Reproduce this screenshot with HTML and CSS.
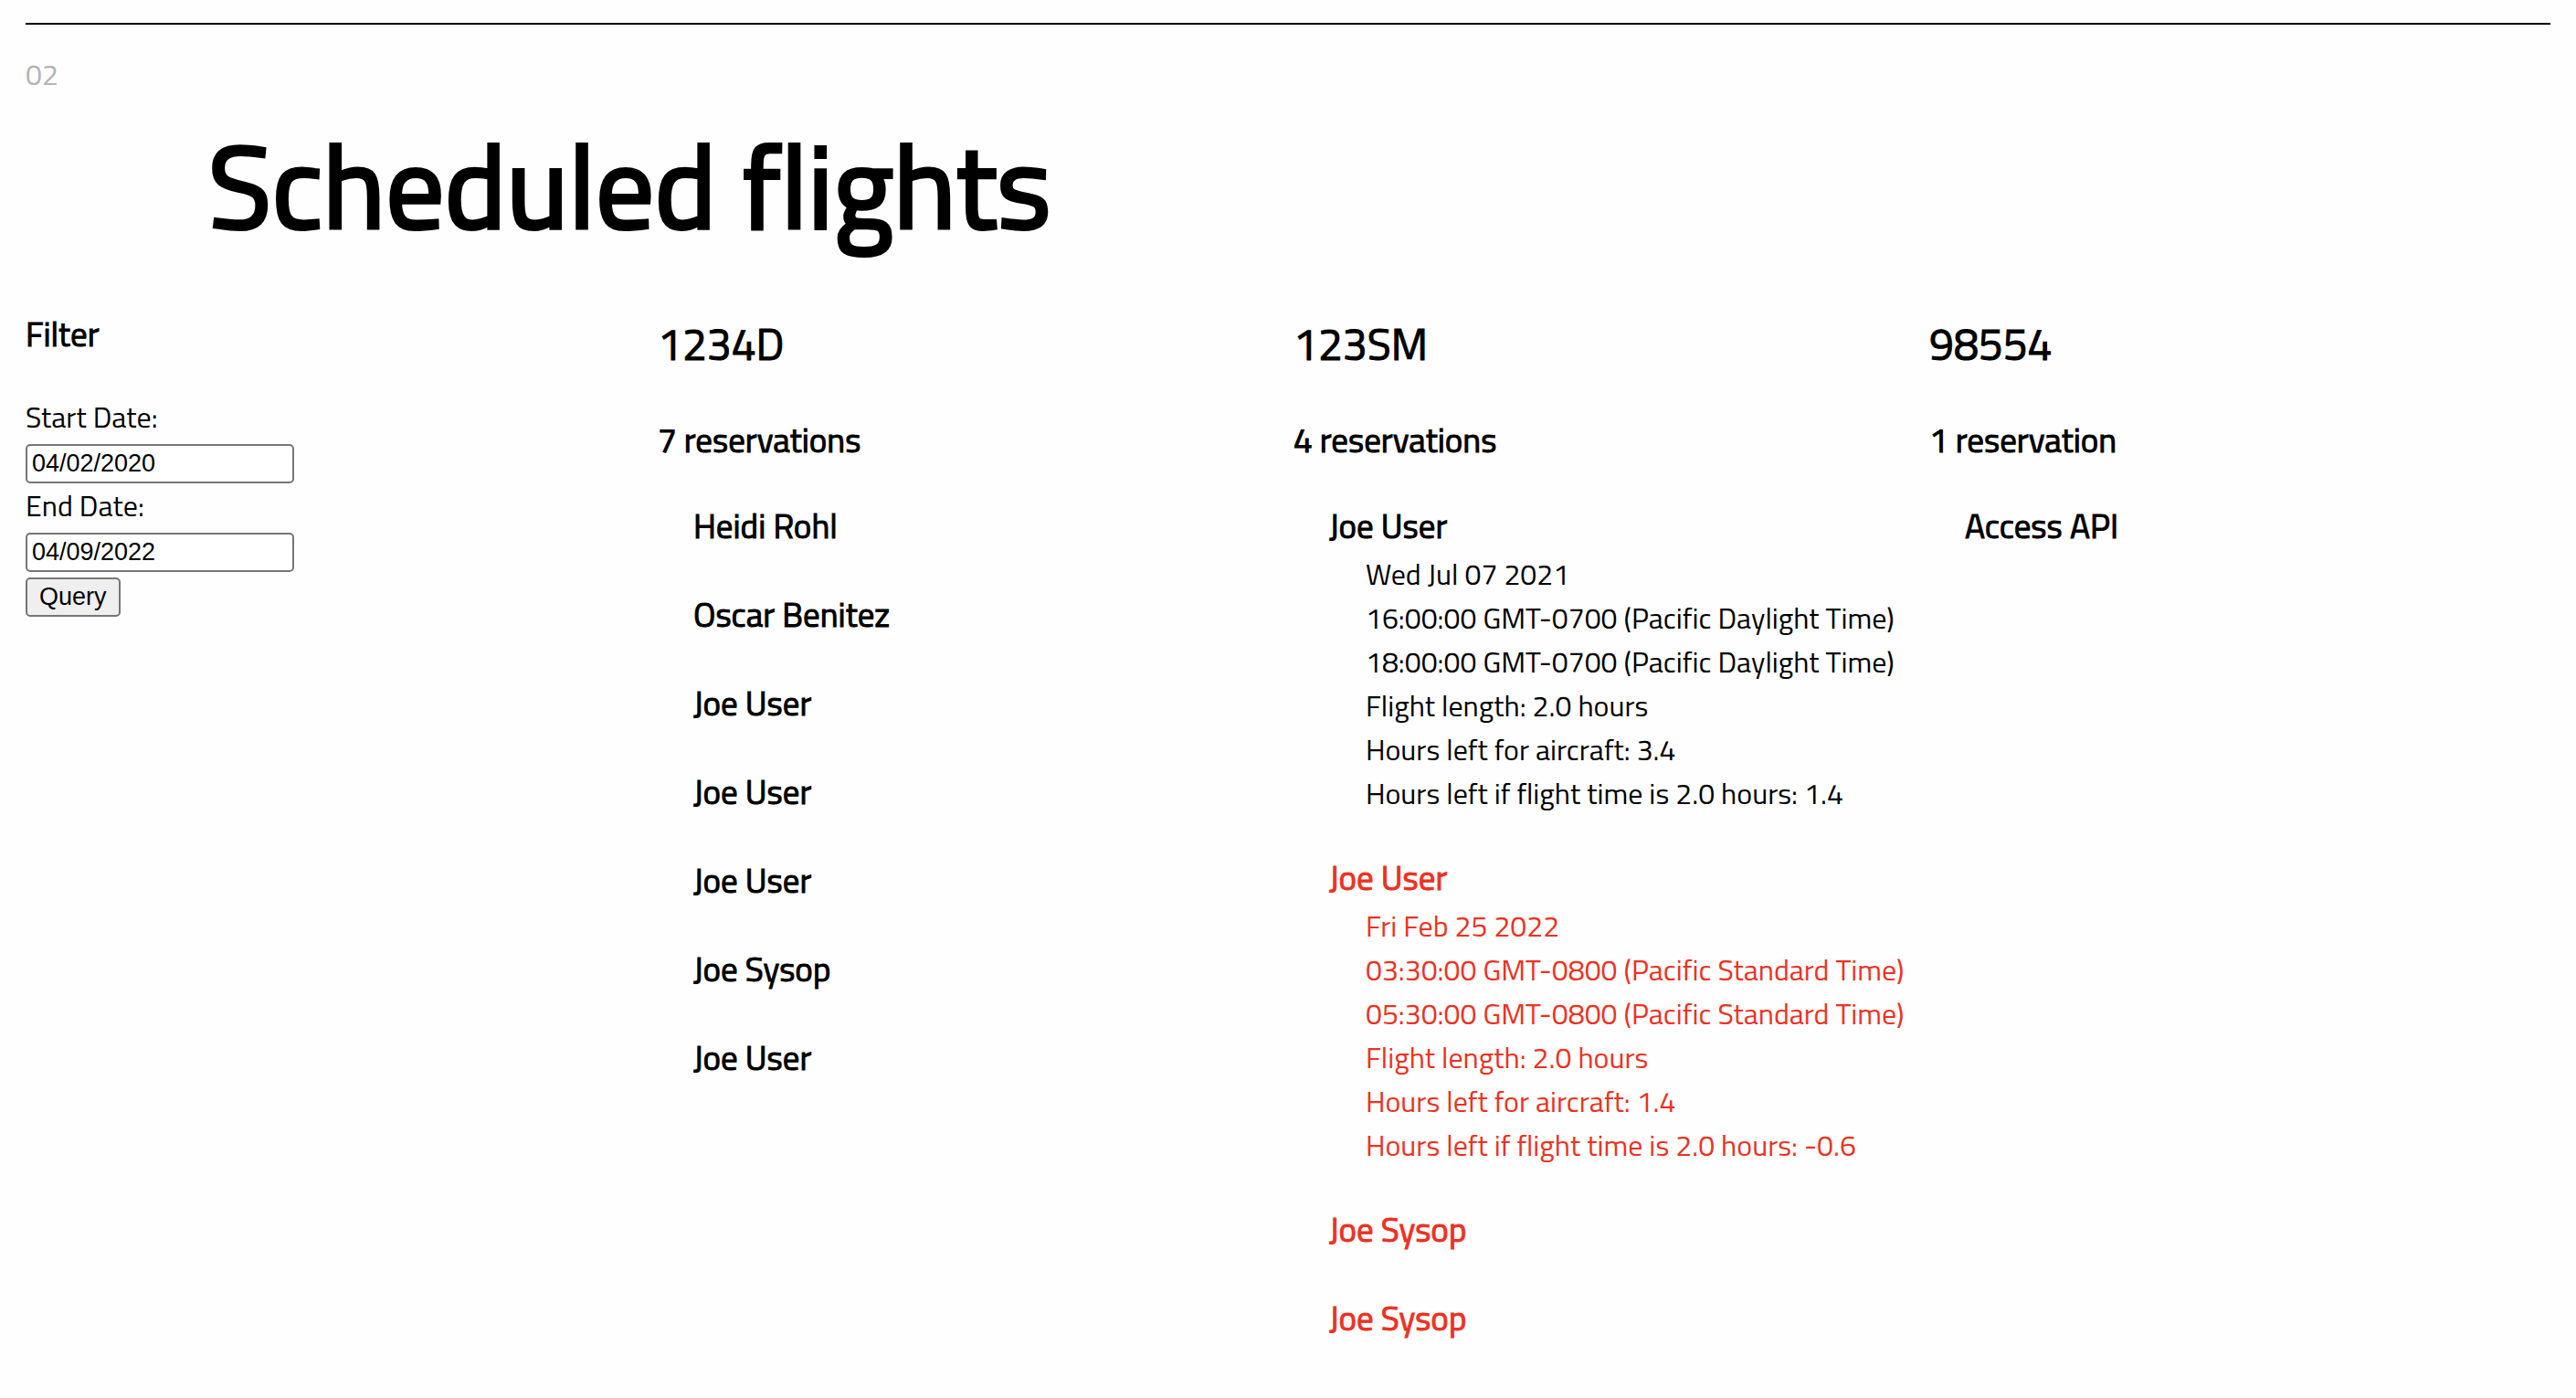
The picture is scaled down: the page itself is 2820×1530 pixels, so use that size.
FILE: index.html
```html
<!DOCTYPE html>
<html lang="en">
<head>
<meta charset="utf-8">
<title>Scheduled flights</title>
<link rel="stylesheet" href="styles.css">
</head>
<body>
<main class="section">
  <p class="section-number">02</p>
  <h1 class="title">Scheduled flights</h1>
  <div class="board">
    <form class="filter">
      <h2 class="filter-title">Filter</h2>
      <label class="filter-label" for="start">Start Date:</label>
      <input class="filter-input" id="start" type="text" value="04/02/2020">
      <label class="filter-label" for="end">End Date:</label>
      <input class="filter-input" id="end" type="text" value="04/09/2022">
      <button class="filter-button" type="button">Query</button>
    </form>
    <section class="aircraft">
      <h2 class="tail">1234D</h2>
      <h3 class="count">7 reservations</h3>
      <ul class="reservations">
        <li class="reservation"><h4 class="pilot">Heidi Rohl</h4></li>
        <li class="reservation"><h4 class="pilot">Oscar Benitez</h4></li>
        <li class="reservation"><h4 class="pilot">Joe User</h4></li>
        <li class="reservation"><h4 class="pilot">Joe User</h4></li>
        <li class="reservation"><h4 class="pilot">Joe User</h4></li>
        <li class="reservation"><h4 class="pilot">Joe Sysop</h4></li>
        <li class="reservation"><h4 class="pilot">Joe User</h4></li>
      </ul>
    </section>
    <section class="aircraft">
      <h2 class="tail">123SM</h2>
      <h3 class="count">4 reservations</h3>
      <ul class="reservations">
        <li class="reservation">
          <h4 class="pilot">Joe User</h4>
          <ul class="details">
            <li>Wed Jul 07 2021</li>
            <li>16:00:00 GMT-0700 (Pacific Daylight Time)</li>
            <li>18:00:00 GMT-0700 (Pacific Daylight Time)</li>
            <li>Flight length: 2.0 hours</li>
            <li>Hours left for aircraft: 3.4</li>
            <li>Hours left if flight time is 2.0 hours: 1.4</li>
          </ul>
        </li>
        <li class="reservation over">
          <h4 class="pilot">Joe User</h4>
          <ul class="details">
            <li>Fri Feb 25 2022</li>
            <li>03:30:00 GMT-0800 (Pacific Standard Time)</li>
            <li>05:30:00 GMT-0800 (Pacific Standard Time)</li>
            <li>Flight length: 2.0 hours</li>
            <li>Hours left for aircraft: 1.4</li>
            <li>Hours left if flight time is 2.0 hours: -0.6</li>
          </ul>
        </li>
        <li class="reservation over"><h4 class="pilot">Joe Sysop</h4></li>
        <li class="reservation over"><h4 class="pilot">Joe Sysop</h4></li>
      </ul>
    </section>
    <section class="aircraft">
      <h2 class="tail">98554</h2>
      <h3 class="count">1 reservation</h3>
      <ul class="reservations">
        <li class="reservation"><h4 class="pilot">Access API</h4></li>
      </ul>
    </section>
  </div>
</main>
</body>
</html>
```
FILE: styles.css
```css
* {
  box-sizing: border-box;
}

body,
h1,
h2,
h3,
h4,
p,
ul {
  margin: 0;
  padding: 0;
}

/* Headings use the regular cut, thickened slightly. */
h1,
h2,
h3,
h4 {
  font-weight: 400;
  -webkit-text-stroke: 1px currentColor;
}

ul {
  list-style: none;
}

body {
  padding: 25px 28px 0;
  background: #fefefe;
  color: #000;
  font-family: "Titillium Web", Roboto, sans-serif;
  font-size: 32px;
  line-height: 48px;
}

.section {
  border-top: 2px solid #000;
}

.section-number {
  padding-top: 30px;
  color: #b3b3b3;
}

.title {
  margin: 26px 0 0 200px;
  font-size: 128px;
  line-height: 144px;
  -webkit-text-stroke-width: 4px;
}

.board {
  display: grid;
  grid-template-columns: repeat(4, minmax(0, 1fr));
  margin: 62px -16px 0 -4px;
}

.filter {
  display: flex;
  flex-direction: column;
  align-items: flex-start;
  padding-left: 4px;
}

.filter-title {
  margin-bottom: 39px;
  font-size: 37px;
  line-height: 56px;
}

.filter-label {
  line-height: 48px;
}

.filter-input,
.filter-button {
  height: 43px;
  margin: 6px 0 0;
  border: 2px solid #767676;
  border-radius: 5px;
  color: #000;
  font-family: "Liberation Sans", Arial, sans-serif;
  font-size: 27px;
}

.filter-input {
  width: 294px;
  padding: 0 5px;
  background: #fff;
}

.filter-button {
  padding: 0 13px;
  background: #efefef;
}

.tail {
  margin-top: 4px;
  font-size: 48px;
  line-height: 72px;
}

.count {
  margin-top: 40px;
  font-size: 37px;
  line-height: 56px;
}

.reservations {
  display: flex;
  flex-direction: column;
  gap: 39px;
  margin-top: 37px;
  padding-left: 39px;
}

.pilot {
  font-size: 37px;
  line-height: 58px;
}

.details {
  padding-left: 40px;
}

.over {
  color: #ec3223;
}
```
